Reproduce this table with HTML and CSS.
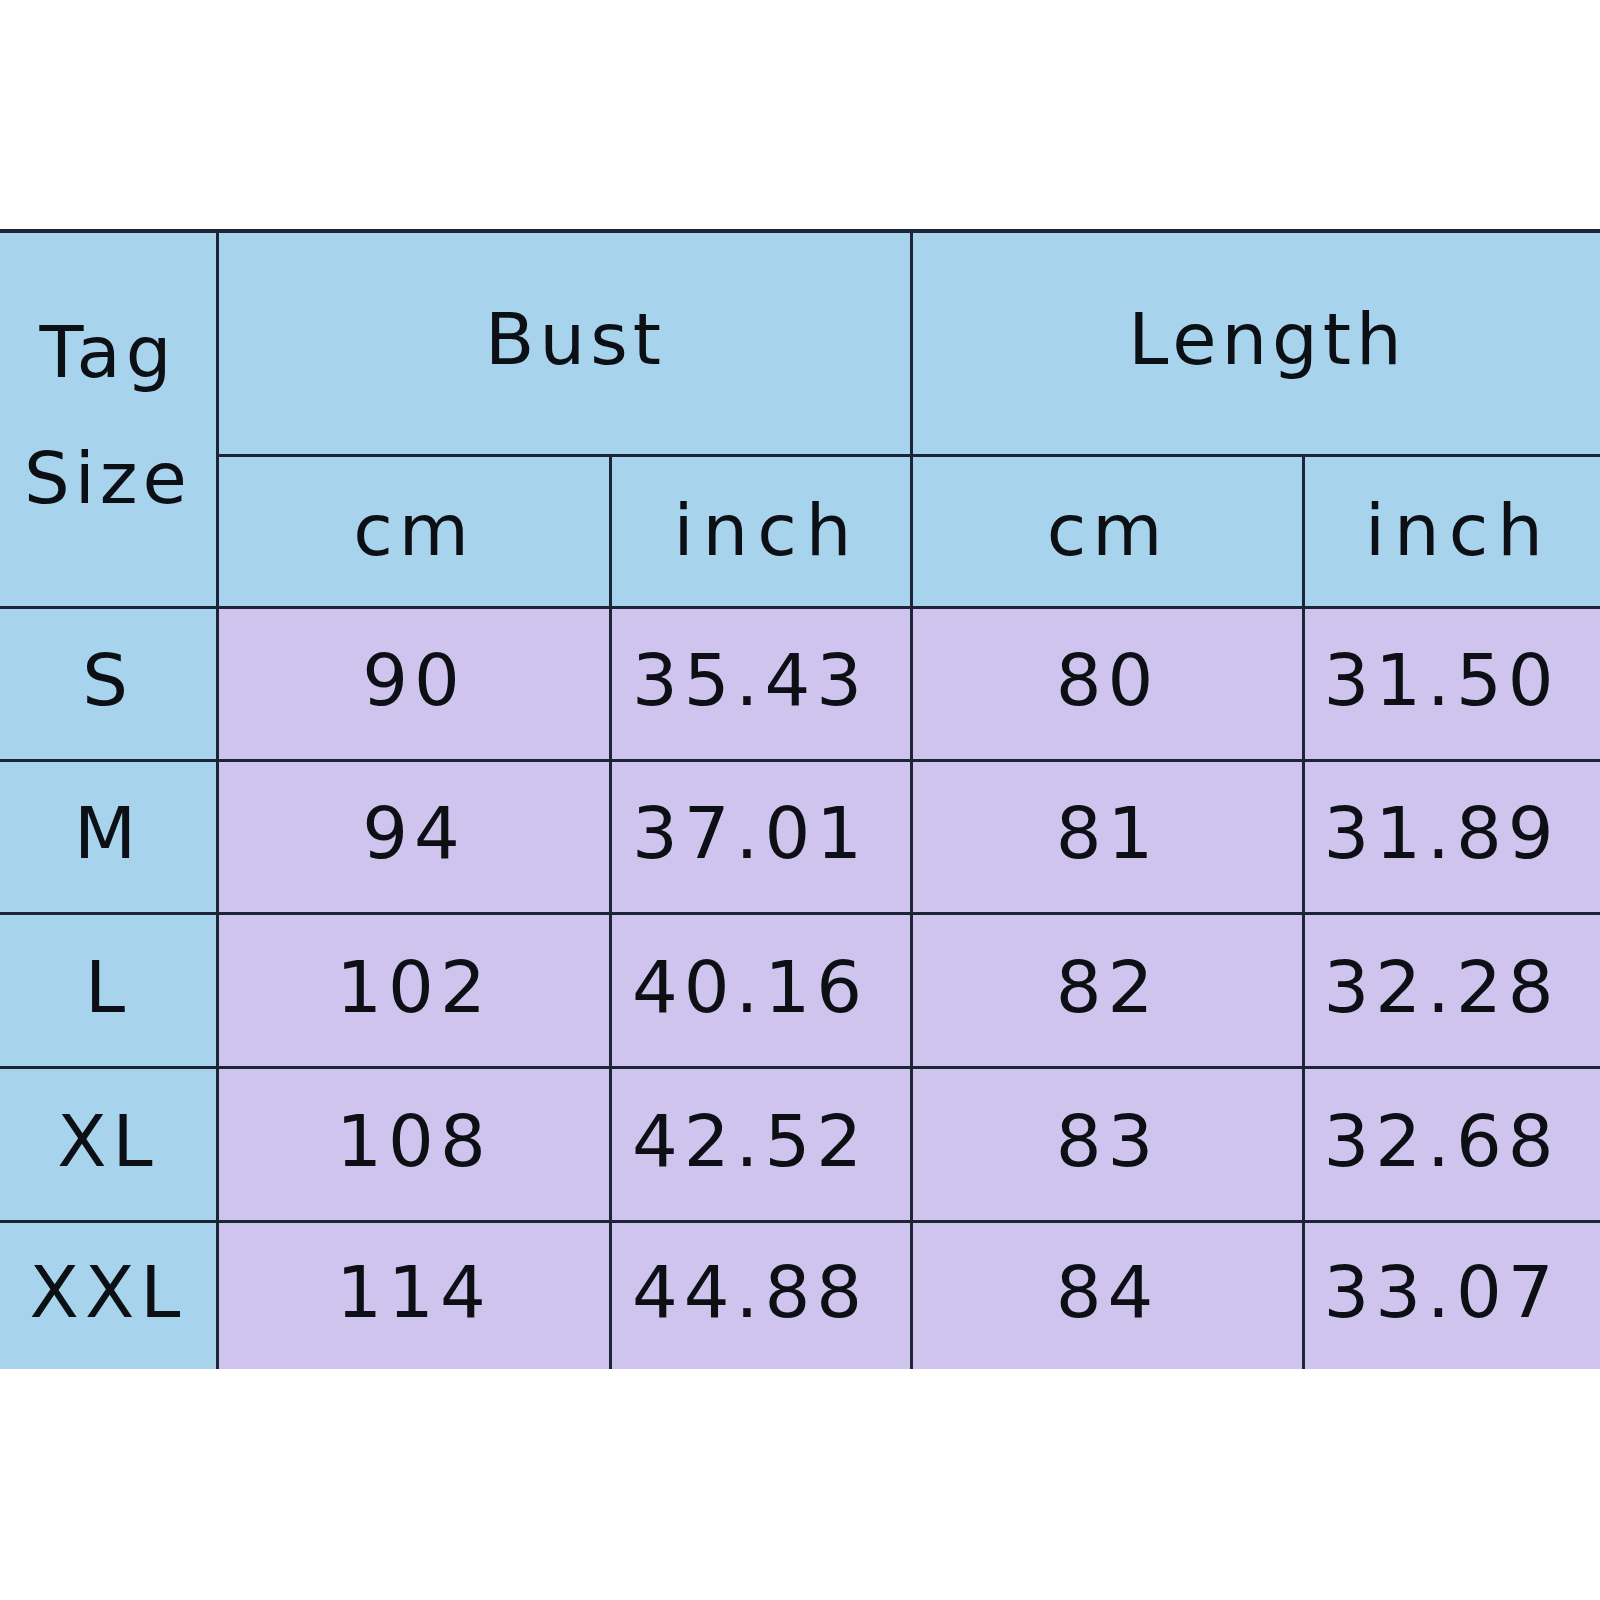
FILE: index.html
```html
<!DOCTYPE html>
<html lang="en">
<head>
<meta charset="utf-8">
<title>Size Chart</title>
<link rel="stylesheet" href="styles.css">
</head>
<body>
<div class="page">
  <div class="chart">
    <div class="cell head tag">Tag<br>Size</div>
    <div class="cell head group">Bust</div>
    <div class="cell head group">Length</div>
    <div class="cell head unit">cm</div>
    <div class="cell head unit inch-head">inch</div>
    <div class="cell head unit">cm</div>
    <div class="cell head unit inch-head">inch</div>

    <div class="cell size">S</div>
    <div class="cell val">90</div>
    <div class="cell val inch">35.43</div>
    <div class="cell val">80</div>
    <div class="cell val inch">31.50</div>

    <div class="cell size">M</div>
    <div class="cell val">94</div>
    <div class="cell val inch">37.01</div>
    <div class="cell val">81</div>
    <div class="cell val inch">31.89</div>

    <div class="cell size">L</div>
    <div class="cell val">102</div>
    <div class="cell val inch">40.16</div>
    <div class="cell val">82</div>
    <div class="cell val inch">32.28</div>

    <div class="cell size">XL</div>
    <div class="cell val">108</div>
    <div class="cell val inch">42.52</div>
    <div class="cell val">83</div>
    <div class="cell val inch">32.68</div>

    <div class="cell size">XXL</div>
    <div class="cell val">114</div>
    <div class="cell val inch">44.88</div>
    <div class="cell val">84</div>
    <div class="cell val inch">33.07</div>
  </div>
</div>
</body>
</html>
```

FILE: styles.css
```css
html, body {
  margin: 0;
  padding: 0;
  background: #ffffff;
}

.page {
  width: 1600px;
  height: 1600px;
  padding-top: 229px;
  box-sizing: border-box;
  background: #ffffff;
}

.chart {
  display: grid;
  grid-template-columns: 216px 390px 298px 389px 295px;
  grid-template-rows: 221px 149px 150px 150px 151px 151px 146px;
  gap: 3px;
  background: #1c2535;
  border-top: 4px solid #1c2535;
  font-family: "DejaVu Sans", sans-serif;
  font-size: 72px;
  color: #0c0f14;
  letter-spacing: 6px;
}

.cell {
  display: flex;
  align-items: center;
  justify-content: center;
  text-align: center;
  box-sizing: border-box;
}

.head,
.size {
  background: #a7d4ec;
}

.val {
  background: #cec4ee;
  padding-bottom: 8px;
}

.size {
  padding-bottom: 8px;
}

.inch {
  padding-right: 22px;
}

.tag {
  grid-row: 1 / span 2;
  line-height: 126px;
  padding-bottom: 10px;
  letter-spacing: 5px;
}

.group {
  grid-column: span 2;
  padding-bottom: 10px;
  padding-left: 22px;
  letter-spacing: 5px;
}

.unit {
  padding-bottom: 4px;
}

.inch-head {
  padding-left: 12px;
  letter-spacing: 9px;
}
```
